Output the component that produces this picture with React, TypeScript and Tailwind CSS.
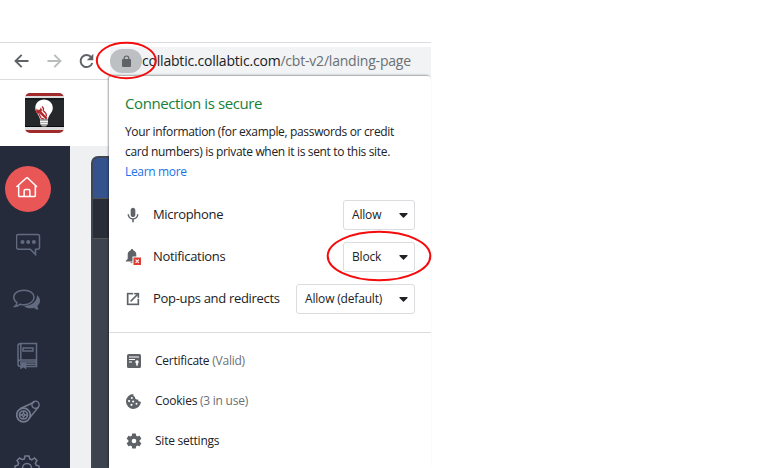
import React from "react";

function Caret() {
  return (
    <svg className="h-[5px] w-[9px] shrink-0" viewBox="0 0 9 5">
      <path d="M.5 0h8v1L4.500 5 .5 1z" fill="#202124" />
    </svg>
  );
}

function Select({ label, className }: { label: string; className: string }) {
  return (
    <div className={`flex h-[30px] items-center justify-between rounded-[3px] border border-[#dadce0] bg-white pr-[6px] pl-2 text-[12px] tracking-[-0.18px] text-[#202124] ${className}`}>
      <span className="whitespace-nowrap">{label}</span>
      <Caret />
    </div>
  );
}

function MicIcon() {
  return (
    <svg className="size-4" viewBox="0 0 24 24" fill="#5f6368">
      <path d="M12 15c2 0 3.500-1.500 3.500-3.500V4.500C15.500 2.500 14 1 12 1S8.500 2.500 8.500 4.500v7C8.500 13.500 10 15 12 15zm6-4c0 3.600-2.700 6-6 6s-6-2.400-6-6H3.800c0 4 3.200 7.300 7 7.900V23h2.400v-4.100c3.800-.6 7-3.900 7-7.900z" />
    </svg>
  );
}

function BellBlockedIcon() {
  return (
    <svg className="h-4 w-[17px]" viewBox="0 0 17 16">
      <path d="M7 0c-.8 0-1.200.5-1.200 1.300C3.700 1.900 2.700 3.600 2.700 5.600v4.300L.8 11.700v.8h12.400v-.8l-1.900-1.800V5.600c0-2-1-3.700-3.100-4.300C8.200.5 7.800 0 7 0zM5.400 13.200a1.600 1.600 0 0 0 3 0z" fill="#5f6368" />
      <rect x="7.500" y="7.500" width="9" height="8.500" fill="#fff" />
      <rect x="8.500" y="8.500" width="7.500" height="7.500" fill="#df3b31" />
      <path d="m10.600 10.600 3.200 3.300m0-3.300-3.200 3.300" stroke="#fff" strokeWidth="1.100" />
    </svg>
  );
}

function PopupIcon() {
  return (
    <svg className="size-4" viewBox="0 0 24 24" fill="#5f6368">
      <path d="M19 19H5V5h7V3H3v18h18v-9h-2v7zM14 3v2h3.600l-9.800 9.800 1.400 1.400L19 6.400V10h2V3h-7z" stroke="#5f6368" strokeWidth=".5" />
    </svg>
  );
}

function CertificateIcon() {
  return (
    <svg className="size-[14px]" viewBox="0 0 14 14">
      <rect width="14" height="14" rx="1.500" fill="#5f6368" />
      <path d="M2 3h10M2 5.500h6M2 8h3" stroke="#fff" strokeWidth="1" />
      <circle cx="10" cy="8" r="1.700" fill="#fff" />
      <path d="M9.200 9h1.600v3L10 11.200l-.8.8z" fill="#fff" />
    </svg>
  );
}

function CookieIcon() {
  return (
    <svg className="size-[15px]" viewBox="0 0 15 15">
      <path d="M7.500 0a7.500 7.500 0 1 0 7.500 7.600 2.200 2.200 0 0 1-3-2.100 2.400 2.400 0 0 1-3-2.700A2.200 2.200 0 0 1 7.500 0z" fill="#5f6368" />
      <g fill="#fff">
        <circle cx="5.800" cy="4" r="1" />
        <circle cx="3.100" cy="7.100" r="1.100" />
        <circle cx="7.200" cy="7.500" r="1.100" />
        <circle cx="5.500" cy="10.800" r="1.100" />
        <circle cx="10.500" cy="9.800" r="1" />
      </g>
    </svg>
  );
}

function SettingsIcon() {
  return (
    <svg className="size-[18px]" viewBox="0 0 24 24" fill="#5f6368">
      <path d="M19.430 12.980c.04-.32.07-.64.07-.98s-.03-.66-.07-.98l2.110-1.650c.19-.15.24-.42.12-.64l-2-3.460c-.12-.22-.39-.3-.61-.22l-2.490 1c-.52-.4-1.080-.73-1.690-.98l-.38-2.650A.49.49 0 0 0 14 2h-4c-.25 0-.46.18-.49.42l-.38 2.650c-.61.25-1.170.59-1.690.98l-2.490-1c-.23-.09-.49 0-.61.22l-2 3.460c-.13.22-.07.49.12.64l2.110 1.650c-.04.32-.07.65-.07.98s.03.66.07.98l-2.110 1.650c-.19.15-.24.42-.12.64l2 3.460c.12.22.39.3.61.22l2.490-1c.52.4 1.080.73 1.690.98l.38 2.650c.03.24.24.42.49.42h4c.25 0 .46-.18.49-.42l.38-2.650c.61-.25 1.170-.59 1.690-.98l2.490 1c.23.09.49 0 .61-.22l2-3.460c.12-.22.07-.49-.12-.64zM12 15.100a3.100 3.100 0 1 1 0-6.200 3.100 3.100 0 0 1 0 6.200z" />
    </svg>
  );
}

function Logo() {
  return (
    <svg className="h-[40px] w-[39px]" viewBox="0 0 39 40">
      <rect width="39" height="40" rx="5" fill="#a12a2d" />
      <path d="M0 3h39v34H0z" fill="#dedddd" />
      <path d="M0 5h39v29H0z" fill="#24282b" />
      <path d="M0 6h39M0 33.500h39" stroke="#090c0e" />
      <path d="M19 6.500c-5.300 0-8.700 3.700-8.700 8.500 0 5.200 4.200 6.700 4.700 11.500h8c.4-4.700 4.800-6.500 4.800-11.500 0-4.900-3.600-8.500-8.800-8.500z" fill="#fff" />
      <path d="M15 27h8v4l-2 2.500h-4L15 31z" fill="#aaa" />
      <path d="M15 28.500h8M15.500 30.500h7" stroke="#f6f6f6" />
      <path d="M11.500 15.500 13 17l2-.5.500-2 1.500 2-.5 2 6 6.500-1.500 1.500-6.500-6-2 .5-1.500-2z" fill="#b2292e" />
      <path d="m17 13.500 1.500 2-.3 2 2.800 3 .5 3M14 21l2 4 3 1" fill="none" stroke="#b2292e" strokeWidth="1.300" />
    </svg>
  );
}

function Sidebar() {
  return (
    <nav className="flex h-[322px] w-[70px] shrink-0 flex-col overflow-hidden bg-[#252b3b]">
      <div className="mt-[20px] ml-[5px] flex size-[46px] shrink-0 items-center justify-center rounded-full bg-[#e85656]">
        <svg className="-mt-[3px] -ml-[2px] h-[23px] w-6" viewBox="0 0 24 24" fill="none" stroke="#fff" strokeWidth="1.600" strokeLinejoin="round" strokeLinecap="round">
          <path d="M1.500 11 11 2.300c.7-.6 1.300-.6 2 0L22 11M3.300 10v10.300c0 .8.500 1.200 1.200 1.200h15c.7 0 1.200-.4 1.200-1.200V10M9 21.500v-6c0-1 .5-1.500 1.500-1.500h3c1 0 1.500.5 1.500 1.500v6" />
        </svg>
      </div>
      <div className="ml-4 flex shrink-0 flex-col">
        <svg className="mt-[21px] h-6 w-[25px]" viewBox="0 0 25 24" fill="none" stroke="#626b80" strokeWidth="1.500">
          <path d="M2.500 1.500h19q2 0 2 2v10.700q0 2-2 2h-2v5.300l-5.300-5.300H2.500q-2 0-2-2V3.500q0-2 2-2z" />
          <g fill="#626b80" stroke="none">
            <circle cx="6.500" cy="9" r="2" />
            <circle cx="12.200" cy="9" r="2" />
            <circle cx="17.900" cy="9" r="2" />
          </g>
        </svg>
        <svg className="mt-[32px] -ml-[3px] h-[23px] w-[28px]" viewBox="0 0 28 23">
          <path d="M24 6c4 3.200 4 8 .3 11l1.200 3.700c-2.200-.1-3.500-.7-4.500-2-4 1.200-7.500.5-10.500-2C18 17 24 13.500 24 6z" fill="#626b80" />
          <path d="M11 1.200c5.800 0 10 3 10 7s-4.200 7.600-10 7.600c-1.500 0-2.700-.2-4-.6-1.700 1.600-3 2-5 2.200 1.500-1.200 2-2 1.900-3.800C2 12.300.8 10.600.8 8.200c0-4 4.400-7 10.200-7z" fill="#252b3b" stroke="#626b80" strokeWidth="1.500" />
        </svg>
        <svg className="mt-[30px] ml-[1px] h-[27px] w-[21px]" viewBox="0 0 21 27" fill="none" stroke="#626b80" strokeWidth="1.500">
          <path d="M19.500 18V1.500H3.500Q1 1.500 1 4v18q0 2.500 2.500 2.500h16V18H3.500Q1 18 1 20.500M3.800 2v16M6 6h10v3H6zM3 20h16.500M4 22.300h15.500" />
          <path d="M4 21.500h4.500V26l-2-1.700L4 26z" fill="#626b80" />
        </svg>
        <svg className="mt-[31px] h-[23px] w-6" viewBox="0 0 24 23" fill="none" stroke="#737b8f" strokeWidth="1.400">
          <circle cx="7.500" cy="15" r="6.800" strokeWidth="1.700" />
          <circle cx="7.500" cy="15" r="4" strokeWidth="1.700" />
          <circle cx="7.500" cy="15" r="1.300" />
          <path d="M3.700 15h2.500m2.600 0h2.500m-3.800-3.800v2.500m0 2.600v2.500M4.500 8.500l14-6.500M13.500 18l9-11" />
          <circle cx="19.500" cy="4.700" r="3.600" />
        </svg>
        <svg className="mt-[32px] -ml-[2px] h-[26px] w-[26px]" viewBox="0 0 26 26" fill="none" stroke="#737b8f" strokeWidth="1.500">
          <path d="m10.300 4 .7-3h4l.8 3q1 .2 2 .8L20.500 3 23 5.500l-1.700 2.700q.6 1 .8 2l2.900.8v4l-2.900.8q-.2 1-.8 2l1.700 2.700L20.500 23l-2.700-1.700q-1 .6-2 .8L15 25h-4l-.8-2.900q-1-.2-2-.8L5.500 23 3 20.500l1.700-2.700q-.6-1-.8-2L1 15v-4l2.900-.8q.2-1 .8-2L3 5.500 5.500 3l2.700 1.700q1-.5 2.100-.7z" />
          <circle cx="13" cy="13" r="4.500" />
        </svg>
      </div>
    </nav>
  );
}

function Toolbar() {
  return (
    <header className="flex h-[38px] border-y border-[#dadce0] bg-white">
      <div className="flex w-[110px] shrink-0 items-center pl-[14px]">
        <svg className="h-4 w-[15px]" viewBox="0 0 15 16" fill="none" stroke="#5f6368" strokeWidth="1.900">
          <path d="M14.500 8H1.500m6.200-6.200L1.500 8l6.200 6.200" />
        </svg>
        <svg className="ml-[18px] h-4 w-[15px]" viewBox="0 0 15 16" fill="none" stroke="#babcbe" strokeWidth="1.900">
          <path d="M.5 8h13M7.300 1.800 13.500 8l-6.200 6.200" />
        </svg>
        <svg className="ml-[17px] h-4 w-[15px]" viewBox="0 0 15 16">
          <path d="M12.300 4.300A6 6 0 1 0 13.300 10" fill="none" stroke="#5f6368" strokeWidth="2" />
          <path d="M14.300.8v6.500H7.800z" fill="#5f6368" />
        </svg>
      </div>
      <div className="mt-1 flex h-8 flex-1 bg-[#f1f3f4]">
        <div className="mt-[2px] flex h-[24px] w-8 shrink-0 items-center justify-center rounded-full bg-[#bdc0c2]">
          <svg className="-mt-[1px] h-[12px] w-[9px]" viewBox="0 0 9 12">
            <path d="M2.200 5V3.300a2.300 2.300 0 0 1 4.600 0V5" fill="none" stroke="#5f6368" strokeWidth="1.200" />
            <rect y="4" width="9" height="8" rx="1" fill="#5f6368" />
          </svg>
        </div>
        <span className="mt-[2px] text-[14px] leading-6 tracking-[-0.2px] whitespace-nowrap text-[#202124]">
          collabtic.collabtic.com<span className="text-[#6b6f73]">/cbt-v2/landing-page</span>
        </span>
      </div>
    </header>
  );
}

function SecurityPopup() {
  return (
    <section className="absolute top-[76px] left-[109px] h-[392px] w-[322px] rounded-tl-[3px] rounded-tr-[4px] bg-white shadow-[-1px_-1px_2px_rgba(0,0,0,0.35)]">
      <div className="flex h-[257px] flex-col border-b border-[#dadce0] pl-4">
        <h1 className="mt-[16px] text-[15px] leading-[22px] tracking-[-0.4px] text-[#188038]">Connection is secure</h1>
        <p className="mt-[8px] text-[12px] leading-5 tracking-[-0.34px] whitespace-nowrap text-[#202124]">
          Your information (for example, passwords or credit
          <br />
          card numbers) is private when it is sent to this site.
          <br />
          <a className="text-[#1a73e8]">Learn more</a>
        </p>
        <div className="mt-[18px] flex flex-col gap-3 pr-4 text-[13px] tracking-[-0.32px] text-[#202124]">
          <div className="flex h-[30px] items-center">
            <div className="flex w-7 shrink-0"><MicIcon /></div>
            <span className="flex-1">Microphone</span>
            <Select label="Allow" className="w-[72px]" />
          </div>
          <div className="flex h-[30px] items-center">
            <div className="flex w-7 shrink-0"><BellBlockedIcon /></div>
            <span className="flex-1">Notifications</span>
            <Select label="Block" className="w-[72px]" />
          </div>
          <div className="flex h-[30px] items-center">
            <div className="flex w-7 shrink-0"><PopupIcon /></div>
            <span className="flex-1 whitespace-nowrap">Pop-ups and redirects</span>
            <Select label="Allow (default)" className="w-[119px]" />
          </div>
        </div>
      </div>
      <div className="flex flex-col pt-[8px] pl-4 text-[12px] tracking-[-0.24px] text-[#202124]">
        <div className="flex h-10 items-center">
          <div className="flex w-[30px] pl-[2px]"><CertificateIcon /></div>
          <span>Certificate <span className="text-[#6b6f73]">(Valid)</span></span>
        </div>
        <div className="flex h-10 items-center">
          <div className="flex w-[30px] pl-[1px]"><CookieIcon /></div>
          <span>Cookies <span className="text-[#6b6f73]">(3 in use)</span></span>
        </div>
        <div className="flex h-10 items-center">
          <div className="flex w-[30px]"><SettingsIcon /></div>
          <span>Site settings</span>
        </div>
      </div>
    </section>
  );
}

export default function App() {
  return (
    <div className="relative h-[468px] w-[758px] overflow-hidden bg-white font-['Open_Sans','Noto_Sans',sans-serif]">
      <div className="w-[431px] pt-[42px]">
        <Toolbar />
        <div className="flex h-[66px] items-start pt-[13px] pl-[25px]"><Logo /></div>
        <div className="flex">
          <Sidebar />
          <main className="flex-1 bg-[#eff0f2] pt-[10px] pl-[21px]">
            <div className="h-[312px] overflow-hidden rounded-tl-[7px] border-t-2 border-l-2 border-[#414750] bg-[#3d434e]">
              <div className="h-[41px] border-b border-[#525253] bg-[#34528b]" />
              <div className="h-[40px] border-b border-[#555] bg-[#292d38]" />
            </div>
          </main>
        </div>
      </div>
      <SecurityPopup />
      <svg className="pointer-events-none absolute inset-0 h-[468px] w-[758px]" viewBox="0 0 758 468" fill="none" stroke="#f50b0b" strokeWidth="2">
        <ellipse cx="126.300" cy="60.500" rx="29.500" ry="17.700" />
        <ellipse cx="379" cy="256" rx="51.300" ry="24.300" />
      </svg>
    </div>
  );
}
